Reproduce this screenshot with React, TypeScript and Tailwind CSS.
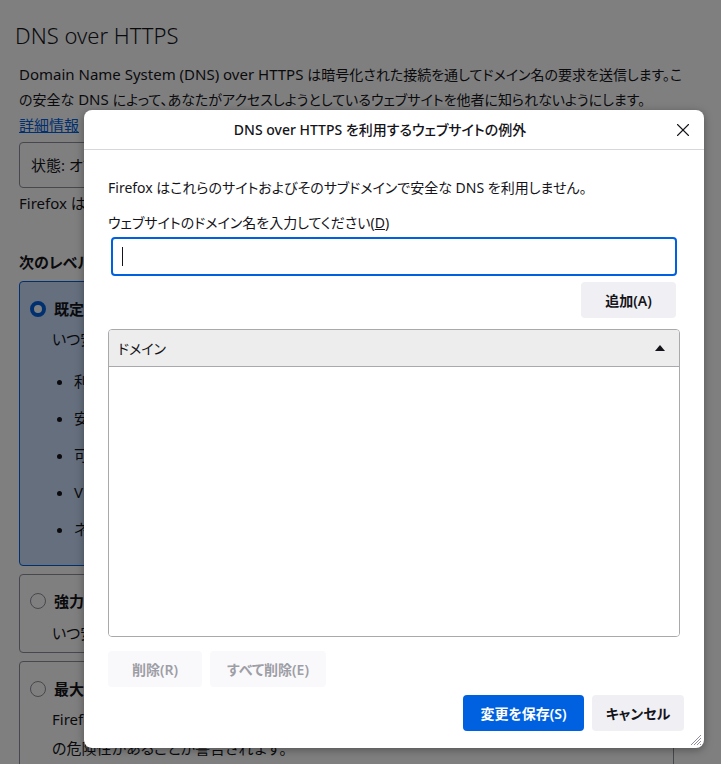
import { X } from "lucide-react";

const bullets = [
  "利用可能な地域では安全な DNS を使用します",
  "安全な DNS プロバイダーに問題がある場合は既定のリゾルバーを使用します",
  "可能な場合はローカルプロバイダーを使用します",
  "VPN、ペアレンタルコントロール、エンタープライズポリシーが有効な場合は無効化",
  "ネットワークから安全な DNS を使用しないよう伝えられた場合は無効化します",
];

function Radio({ checked }: { checked?: boolean }) {
  return checked ? (
    <span className="w-[16px] h-[16px] rounded-full border-[4px] border-[#0061e0] bg-white shrink-0" />
  ) : (
    <span className="w-[16px] h-[16px] rounded-full border border-[#8f8f9d] bg-white shrink-0" />
  );
}

function SettingsPage() {
  return (
    <div className="px-[19px] pt-[18px] text-[15px] text-[#15141a]">
      <h1 className="-ml-[4px] text-[22px] font-light leading-[34px]">DNS over HTTPS</h1>
      <p className="mt-[10px] leading-[24px] whitespace-nowrap">
        <span className="block">
          Domain Name System (DNS) over HTTPS{" "}
          <span className="text-[14px]">は暗号化された接続を通してドメイン名の要求を送信します。こ</span>
        </span>
        <span className="block">
          <span className="text-[14px]">の安全な</span> DNS{" "}
          <span className="text-[14px]">によって、あなたがアクセスしようとしているウェブサイトを他者に知られないようにします。</span>
        </span>
      </p>
      <a className="block leading-[26px] text-[#0061e0] underline">詳細情報</a>
      <div className="mt-[4px] h-[46px] flex items-center px-[11px] border border-[#8f8f9d] rounded-[4px] w-[655px]">
        状態: オフ
      </div>
      <p className="mt-[3px] leading-[24px]">Firefox はこのネットワークで安全な DNS を使用しません。</p>
      <h2 className="mt-[35px] font-bold leading-[24px]">次のレベルで DNS over HTTPS を有効化:</h2>
      <div className="mt-[7px] w-[655px] h-[285px] border border-[#0061e0] bg-[#cadffd] rounded-[4px] pl-[10px] pt-[17px]">
        <div className="flex items-center gap-[8px] leading-[20px]">
          <Radio checked />
          <span className="font-bold">既定の保護</span>
        </div>
        <p className="pl-[22px] mt-[10px] leading-[20px]">いつ安全な DNS を使用するかは Firefox が決定し、プライバシーを保護します。</p>
        <ul className="mt-[13px] pl-[44px] list-disc">
          {bullets.map((b) => (
            <li key={b} className="leading-[20px] py-[8.5px] whitespace-nowrap">
              {b}
            </li>
          ))}
        </ul>
      </div>
      <div className="mt-[8px] w-[655px] h-[79px] border border-[#8f8f9d] rounded-[4px] pl-[10px] pt-[16px]">
        <div className="flex items-center gap-[8px] leading-[20px]">
          <Radio />
          <span className="font-bold">強力な保護</span>
        </div>
        <p className="pl-[22px] mt-[12px] leading-[20px]">いつ安全な DNS を使用するかを Firefox が制御します。</p>
      </div>
      <div className="mt-[8px] w-[655px] h-[120px] border border-[#8f8f9d] rounded-[4px] pl-[10px] pt-[17px]">
        <div className="flex items-center gap-[8px] leading-[20px]">
          <Radio />
          <span className="font-bold">最大限の保護</span>
        </div>
        <p className="pl-[22px] pr-[40px] mt-[6px] leading-[29px]">
          Firefox は常に安全な DNS を使用します。システムの DNS を使用する前に、セキュリティ上の危険性があることが警告されます。
        </p>
      </div>
    </div>
  );
}

function GhostButton({ children, disabled, className }: { children: React.ReactNode; disabled?: boolean; className?: string }) {
  return (
    <button
      className={
        "h-[36px] rounded-[4px] text-[14px] font-semibold flex items-center justify-center " +
        (disabled ? "bg-[#f9f9fb] text-[#9e9ea6]" : "bg-[#f0f0f4] text-[#15141a]") +
        " " +
        (className ?? "")
      }
    >
      {children}
    </button>
  );
}

function ExceptionsDialog() {
  return (
    <div className="absolute left-[84px] top-[110px] w-[620px] h-[638px] bg-white rounded-[8px] shadow-[0_2px_8px_rgba(0,0,0,0.35)] flex flex-col text-[#15141a]">
      <div className="relative h-[40px] shrink-0 flex items-center justify-center pr-[28px] border-b border-[#d7d7db]">
        <span className="text-[14px] font-medium">DNS over HTTPS を利用するウェブサイトの例外</span>
        <X size={22} strokeWidth={1.2} className="absolute right-[10px] top-[9px] text-[#15141a]" />
      </div>
      <div className="flex-1 flex flex-col px-[24px] pt-[27px] text-[14px]">
        <p className="leading-[22px]">Firefox はこれらのサイトおよびそのサブドメインで安全な DNS を利用しません。</p>
        <label className="mt-[13px] leading-[22px]">
          ウェブサイトのドメイン名を入力してください(<span className="underline">D</span>)
        </label>
        <div className="mt-[3px] ml-[3px] w-[566px] h-[39px] border-2 border-[#0061e0] rounded-[4px] flex items-center pl-[9px]">
          <span className="w-px h-[19px] bg-[#15141a]" />
        </div>
        <div className="flex justify-end mt-[6px] pr-[4px]">
          <GhostButton className="w-[95px]">追加(A)</GhostButton>
        </div>
        <div className="mt-[11px] w-[572px] h-[308px] border border-[#a8a8ad] rounded-[4px] overflow-hidden flex flex-col">
          <div className="h-[37px] bg-[#ededed] border-b border-[#a8a8ad] flex items-center justify-between pl-[9px] pr-[14px]">
            <span>ドメイン</span>
            <svg width="10" height="6" viewBox="0 0 10 6">
              <path d="M5 0 L10 6 L0 6 Z" fill="#15141a" />
            </svg>
          </div>
          <div className="flex-1 bg-white" />
        </div>
        <div className="flex gap-[8px] mt-[14px]">
          <GhostButton disabled className="w-[94px]">削除(R)</GhostButton>
          <GhostButton disabled className="w-[116px]">すべて削除(E)</GhostButton>
        </div>
        <div className="flex justify-end gap-[8px] mt-[8px] -mr-[4px]">
          <button className="h-[36px] w-[121px] rounded-[4px] bg-[#0061e0] text-white text-[14px] font-semibold">
            変更を保存(S)
          </button>
          <GhostButton className="w-[92px]">キャンセル</GhostButton>
        </div>
      </div>
      <svg className="absolute right-[2px] bottom-[2px]" width="14" height="14" viewBox="0 0 14 14">
        <path d="M13 3 L3 13 M13 6 L6 13 M13 9 L9 13 M13 12 L12 13" stroke="#8f8f9d" strokeWidth="1" />
      </svg>
    </div>
  );
}

export default function App() {
  return (
    <div className="relative w-[721px] h-[764px] overflow-hidden bg-white font-['Noto_Sans','Noto_Sans_CJK_JP',sans-serif] [font-feature-settings:'palt']">
      <SettingsPage />
      <div className="absolute inset-0 bg-black/50" />
      <ExceptionsDialog />
    </div>
  );
}
